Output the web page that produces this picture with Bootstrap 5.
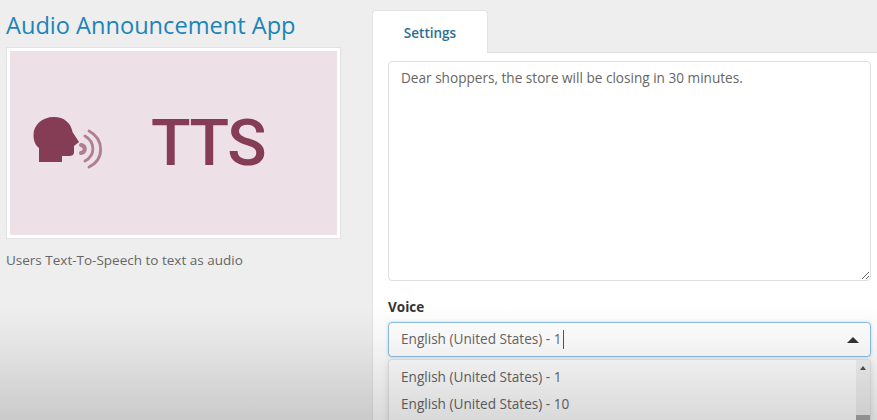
<!DOCTYPE html>
<html lang="en">
<head>
    <meta charset="UTF-8">
    <meta name="viewport" content="width=device-width, initial-scale=1.0">
    <title>Audio Announcement App</title>
    <link href="https://cdn.jsdelivr.net/npm/bootstrap@5.3.0/dist/css/bootstrap.min.css" rel="stylesheet">
    <style>
        html, body {
            height: 420px;
            overflow: hidden;
        }
        body {
            background-color: #eeeeee;
            font-family: "Open Sans", "Noto Sans", sans-serif;
            font-size: 13.5px;
            color: #666;
        }
        .page-wrap {
            height: 420px;
            overflow: hidden;
        }
        .app-side {
            width: 372px;
            padding: 0 31px 0 6px;
        }
        .app-title {
            font-family: "Open Sans", sans-serif;
            font-size: 23.6px;
            line-height: 32px;
            margin: 9px 0 6px;
            color: #1d84b8;
            white-space: nowrap;
        }
        .app-thumb {
            background: #fff;
            border: 1px solid #e2e2e2;
            padding: 3px;
            height: 192px;
        }
        .thumb-inner {
            background: #ede0e6;
            height: 100%;
            padding-left: 23px;
            gap: 48px;
            color: #853c55;
        }
        .tts-text {
            font-family: Roboto, "Liberation Sans", sans-serif;
            font-size: 65px;
            font-weight: 500;
            line-height: 75px;
            letter-spacing: -1.5px;
        }
        .app-desc {
            margin: 11px 0 0;
            line-height: 20px;
            color: #666;
        }
        .settings-side {
            min-width: 0;
            padding-top: 10px;
        }
        .tab-strip {
            height: 43px;
            border-bottom: 1px solid #ddd;
        }
        .tab-link {
            width: 116px;
            height: 43px;
            background: #fff;
            border: 1px solid #e3e3e3;
            border-bottom: 0;
            border-radius: 4px 4px 0 0;
            color: #2a6f97;
            font-weight: 600;
            text-align: center;
            line-height: 44px;
        }
        .settings-pane {
            background: #fff;
            height: 367px;
            padding: 8px 6px 0 15px;
            border-left: 1px solid #e3e3e3;
        }
        .msg-box.form-control {
            height: 220px;
            padding: 3px 12px;
            font-size: 13.6px;
            line-height: 26px;
            color: #666;
            border-color: #dedede;
            border-radius: 4px;
            margin-bottom: 16px;
        }
        .voice-label {
            display: block;
            font-weight: 700;
            color: #333;
            line-height: 20px;
            margin-bottom: 5px;
        }
        .voice-select {
            height: 35px;
            padding: 0 12px;
            font-size: 13.6px;
            border: 1px solid #8fbfe3;
            border-radius: 4px;
            box-shadow: 0 0 3px rgba(90, 160, 220, .45);
            background: #fff;
            color: #666;
        }
        .text-cursor {
            display: inline-block;
            width: 1px;
            height: 19px;
            background: #555;
            margin-left: 1px;
        }
        .caret-up {
            width: 0;
            height: 0;
            border-left: 6px solid transparent;
            border-right: 6px solid transparent;
            border-bottom: 6px solid #333;
            margin-right: -1px;
        }
        .voice-menu {
            margin-top: 2px;
            height: 62px;
            border: 1px solid #e4e4e4;
            border-bottom: 0;
            border-radius: 4px 4px 0 0;
            box-shadow: 0 2px 6px rgba(0, 0, 0, .12);
            background: #fff;
            overflow: hidden;
        }
        .voice-option {
            padding: 0 12px;
            font-size: 13.6px;
            line-height: 26.5px;
        }
        .voice-options {
            padding-top: 4px;
            min-width: 0;
        }
        .menu-scroll {
            width: 14px;
            background: #f1f1f1;
            padding-top: 6px;
        }
        .scroll-arrow {
            width: 0;
            height: 0;
            border-left: 3px solid transparent;
            border-right: 3px solid transparent;
            border-bottom: 4px solid #505050;
        }
        .scroll-thumb {
            width: 100%;
            height: 6px;
            margin-top: auto;
            background: #a8a8a8;
        }
        .video-fade {
            position: absolute;
            left: 0;
            right: 0;
            bottom: 0;
            height: 115px;
            background: linear-gradient(to bottom, rgba(0, 0, 0, 0), rgba(0, 0, 0, .035) 30%, rgba(0, 0, 0, .15));
            pointer-events: none;
        }
    </style>
</head>
<body>

<div class="page-wrap d-flex position-relative">
    <div class="app-side flex-shrink-0">
        <h1 class="app-title fw-normal">Audio Announcement App</h1>
        <div class="app-thumb">
            <div class="thumb-inner d-flex align-items-center">
                <svg width="70" height="54" viewBox="0 -1 70 54" class="flex-shrink-0" aria-hidden="true">
                    <path fill="currentColor" d="M6 45V31C2 28 .5 23 .5 18C.5 8 9 0 21 0C31 0 38 6 39.5 15L46 25L41 29V35C41 38 39 39 36 39H29V45Z"/>
                    <g fill="none" stroke="currentColor" stroke-opacity=".6" stroke-linecap="round">
                        <path stroke-width="4" d="M48 28C53 29 53 35 48 36"/>
                        <path stroke-width="2.8" d="M52 19C62 25 63 38 52 44"/>
                        <path stroke-width="2.8" d="M56 14C71 22 72 42 56 50"/>
                    </g>
                </svg>
                <div class="tts-text">TTS</div>
            </div>
        </div>
        <p class="app-desc">Users Text-To-Speech to text as audio</p>
    </div>

    <div class="settings-side flex-grow-1">
        <div class="tab-strip">
            <div class="tab-link">Settings</div>
        </div>
        <div class="settings-pane">
            <textarea class="form-control msg-box">Dear shoppers, the store will be closing in 30 minutes.</textarea>
            <label class="voice-label">Voice</label>
            <div class="voice-select d-flex align-items-center justify-content-between">
                <span class="d-flex align-items-center">English (United States) - 1<span class="text-cursor"></span></span>
                <span class="caret-up"></span>
            </div>
            <div class="voice-menu d-flex">
                <div class="voice-options flex-grow-1">
                    <div class="voice-option">English (United States) - 1</div>
                    <div class="voice-option">English (United States) - 10</div>
                </div>
                <div class="menu-scroll d-flex flex-column align-items-center">
                    <span class="scroll-arrow"></span>
                    <span class="scroll-thumb"></span>
                </div>
            </div>
        </div>
    </div>
    <div class="video-fade"></div>
</div>

<script src="https://cdn.jsdelivr.net/npm/bootstrap@5.3.0/dist/js/bootstrap.bundle.min.js"></script>
</body>
</html>
